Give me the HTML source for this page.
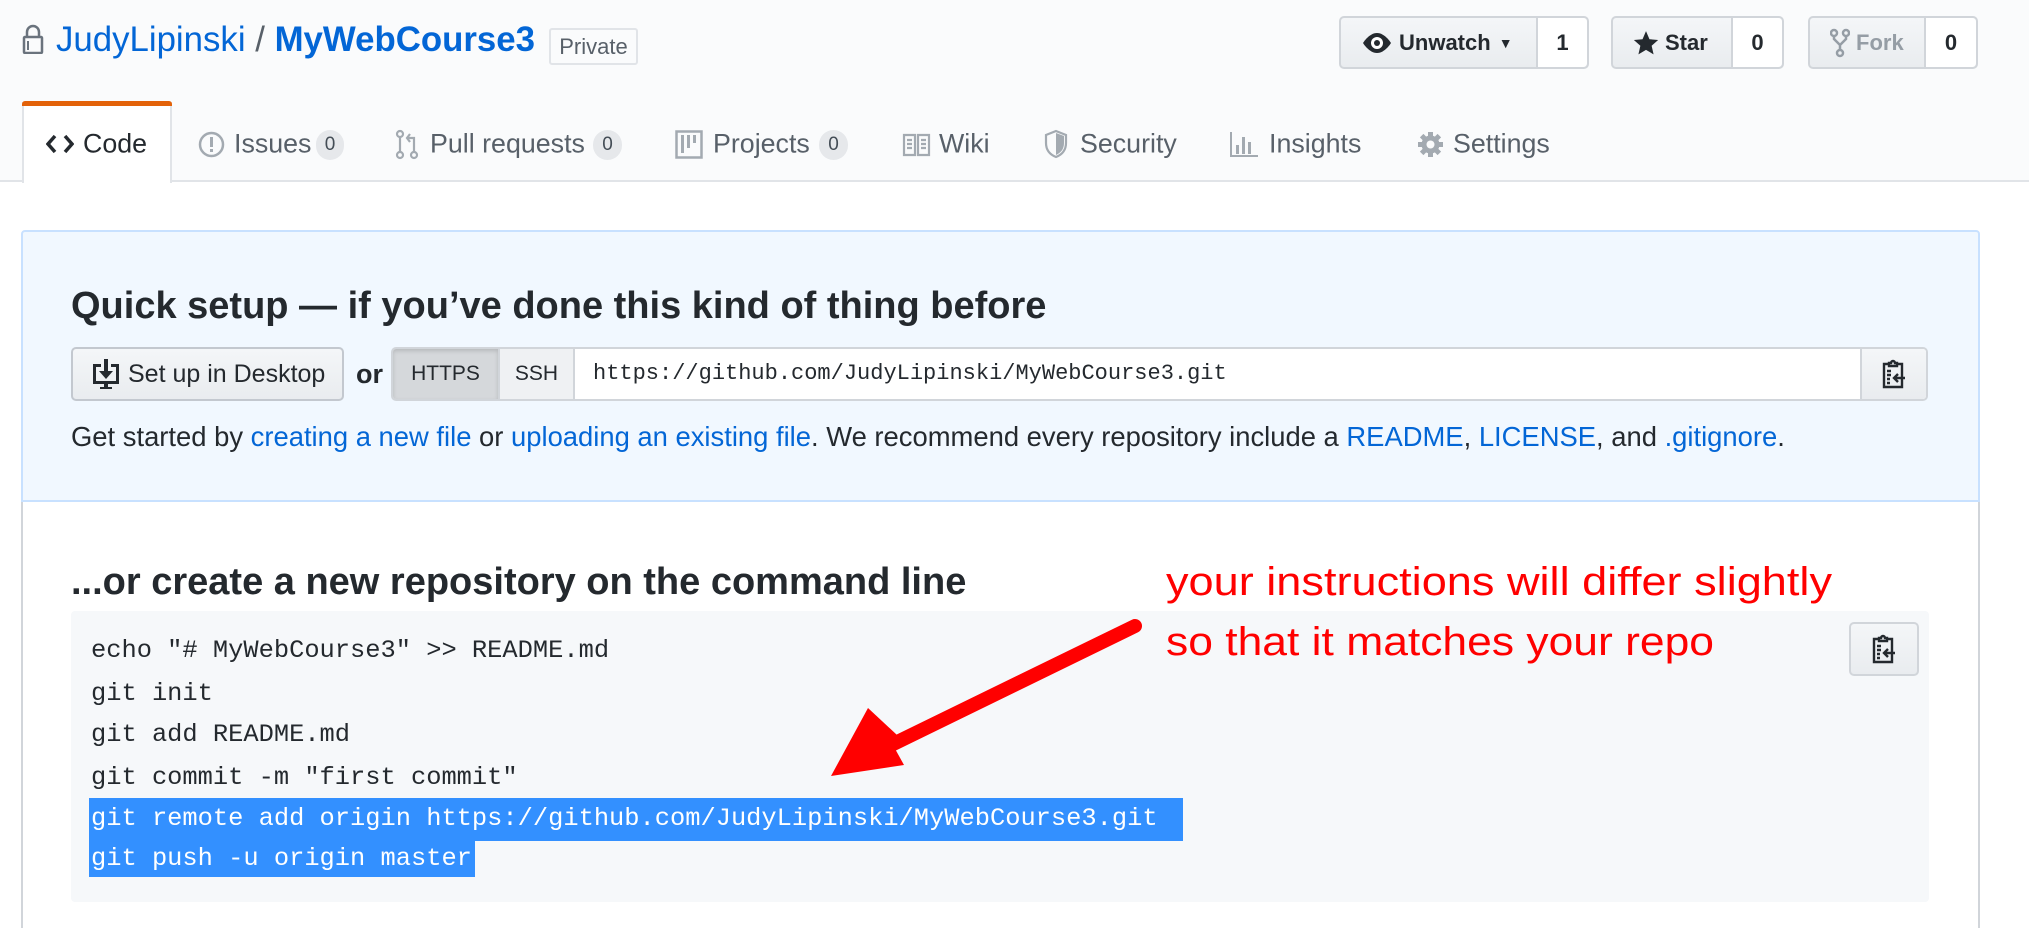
<!DOCTYPE html>
<html><head><meta charset="utf-8"><style>
*{box-sizing:border-box;margin:0;padding:0}
body{width:2029px;height:928px;overflow:hidden;background:#fff;font-family:"Liberation Sans",Arial,sans-serif;color:#24292e;position:relative}
.a{position:absolute}
.hdr{left:0;top:0;width:2029px;height:182px;background:#fafbfc;border-bottom:2px solid #e1e4e8}
.title{left:56px;top:20px;font-size:34.8px;color:#0366d6;white-space:nowrap}
.priv{left:549px;top:28px;width:89px;height:37px;border:2px solid #e1e4e8;border-radius:3px;font-size:22px;color:#586069;text-align:center;line-height:33px}
.btn{border:2px solid #d1d5da;border-radius:5px;background:linear-gradient(#f4f6f8,#e9ecef);display:flex;align-items:center;font-weight:bold;font-size:22px;color:#24292e}
.cnt{position:absolute;top:0;bottom:0;background:#fff;border-left:2px solid #d1d5da;display:flex;align-items:center;justify-content:center;font-weight:bold;font-size:22px;border-radius:0 4px 4px 0}
.tab{top:144px;transform:translateY(-50%);font-size:26.8px;color:#586069;white-space:nowrap}
.bdg{top:130px;height:30px;border-radius:15px;background:#e6e8eb;font-size:19px;color:#444d56;text-align:center;line-height:30px}
.blue{left:21px;top:230px;width:1959px;height:272px;background:#f1f8ff;border:2px solid #c8e1ff;border-radius:4px 4px 0 0}
.h3{font-size:38px;font-weight:bold;white-space:nowrap;color:#24292e}
.mono{font-family:"Liberation Mono","DejaVu Sans Mono",monospace}
a{color:#0366d6;text-decoration:none}
.code{left:71px;top:611px;width:1858px;height:291px;background:#f6f8fa;border-radius:4px}
.ln{left:91px;font-size:25.4px;white-space:pre;line-height:42px;height:42px}
.sel{background:#3390ff;color:#fff}
</style></head><body>
<div class="a hdr"></div>
<svg class="a" style="left:22px;top:24px" width="22" height="30" viewBox="0 0 22 30"><rect x="2" y="13" width="18" height="16" rx="1" fill="none" stroke="#6a737d" stroke-width="2.5"/><path d="M5 13V8a6 6 0 0 1 12 0v5" fill="none" stroke="#6a737d" stroke-width="2.5"/><rect x="5" y="17" width="2" height="9" fill="#6a737d"/></svg>
<div class="a title">JudyLipinski <span style="color:#586069">/</span> <b style="font-weight:bold">MyWebCourse3</b></div>
<div class="a priv">Private</div>

<div class="a btn" style="left:1339px;top:16px;width:250px;height:53px;padding-left:20px">
<svg width="32" height="24" viewBox="0 0 32 24" style="margin-right:6px"><path d="M16 2C8 2 2 12 2 12s6 10 14 10 14-10 14-10S24 2 16 2z" fill="#24292e"/><circle cx="16" cy="12" r="6" fill="#fff"/><circle cx="16" cy="12" r="3" fill="#24292e"/></svg>Unwatch<span style="font-size:14px;margin-left:8px">▼</span>
<div class="cnt" style="left:195px;right:0">1</div></div>
<div class="a btn" style="left:1611px;top:16px;width:173px;height:53px;padding-left:20px">
<svg width="26" height="26" viewBox="0 0 24 24" style="margin-right:6px"><path d="M12 1l3.2 7.5 8 .7-6 5.3 1.8 8L12 18.3 5 22.5l1.8-8-6-5.3 8-.7z" fill="#24292e"/></svg>Star
<div class="cnt" style="left:118px;right:0">0</div></div>
<div class="a btn" style="left:1808px;top:16px;width:170px;height:53px;padding-left:20px;color:#959da5">
<svg width="20" height="30" viewBox="0 0 20 30" style="margin-right:6px"><g fill="none" stroke="#959da5" stroke-width="2.5"><circle cx="4" cy="5" r="3"/><circle cx="16" cy="5" r="3"/><circle cx="10" cy="25" r="3"/><path d="M4 8v3l6 6 6-6V8M10 17v5"/></g></svg>Fork
<div class="cnt" style="left:114px;right:0;color:#24292e">0</div></div>

<!-- tabs -->
<div class="a" style="left:22px;top:102px;width:150px;height:81px;background:#fff;border:2px solid #e1e4e8;border-top:none;border-bottom:none"></div>
<div class="a" style="left:22px;top:101px;width:150px;height:5px;background:#e36209;border-radius:3px 3px 0 0"></div>
<svg class="a" style="left:46px;top:133px" width="28" height="22" viewBox="0 0 28 22"><path d="M9 3L2 11l7 8M19 3l7 8-7 8" fill="none" stroke="#24292e" stroke-width="3.5"/></svg>
<div class="a tab" style="left:83px;color:#24292e">Code</div>
<svg class="a" style="left:198px;top:131px" width="27" height="27" viewBox="0 0 27 27"><circle cx="13.5" cy="13.5" r="11.5" fill="none" stroke="#a3aab1" stroke-width="2.5"/><rect x="12" y="6" width="3" height="10" fill="#a3aab1"/><rect x="12" y="18" width="3" height="3" fill="#a3aab1"/></svg>
<div class="a tab" style="left:234px">Issues</div><div class="a bdg" style="left:316px;width:28px">0</div>
<svg class="a" style="left:395px;top:129px" width="24" height="31" viewBox="0 0 24 31"><g fill="none" stroke="#a3aab1" stroke-width="2.2"><circle cx="5" cy="5" r="3"/><circle cx="5" cy="26" r="3"/><circle cx="19" cy="26" r="3"/><path d="M5 8v15M19 23V9h-6M15 5l-3 4 3 4"/></g></svg>
<div class="a tab" style="left:430px">Pull requests</div><div class="a bdg" style="left:593px;width:29px">0</div>
<svg class="a" style="left:675px;top:130px" width="28" height="29" viewBox="0 0 28 29"><rect x="1.5" y="1.5" width="25" height="26" fill="none" stroke="#a3aab1" stroke-width="2.5"/><rect x="6" y="5" width="3" height="18" fill="#a3aab1"/><rect x="12" y="5" width="3" height="13" fill="#a3aab1"/><rect x="18" y="5" width="3" height="8" fill="#a3aab1"/></svg>
<div class="a tab" style="left:713px">Projects</div><div class="a bdg" style="left:819px;width:29px">0</div>
<svg class="a" style="left:902px;top:133px" width="29" height="24" viewBox="0 0 29 24"><g fill="none" stroke="#a3aab1" stroke-width="2.2"><path d="M2 2h11v20H2zM16 2h11v20H16z"/><path d="M5 7h5M5 11h5M5 15h5M19 7h5M19 11h5M19 15h5"/></g></svg>
<div class="a tab" style="left:939px">Wiki</div>
<svg class="a" style="left:1044px;top:129px" width="24" height="30" viewBox="0 0 24 30"><path d="M12 2L2 6v8c0 8 5 12 10 14 5-2 10-6 10-14V6z" fill="none" stroke="#a3aab1" stroke-width="2.2"/><path d="M12 4v22c4-2 8-5 8-12V7z" fill="#a3aab1"/></svg>
<div class="a tab" style="left:1080px">Security</div>
<svg class="a" style="left:1229px;top:131px" width="30" height="27" viewBox="0 0 30 27"><g fill="#a3aab1"><rect x="1" y="1" width="2" height="25"/><rect x="1" y="24" width="28" height="2"/><rect x="7" y="14" width="3" height="9"/><rect x="13" y="6" width="3" height="17"/><rect x="19" y="11" width="3" height="12"/></g></svg>
<div class="a tab" style="left:1269px">Insights</div>
<svg class="a" style="left:1417px;top:131px" width="27" height="27" viewBox="0 0 27 27"><g fill="#a3aab1"><circle cx="13.5" cy="13.5" r="9"/><rect x="11" y="1" width="5" height="25"/><rect x="1" y="11" width="25" height="5"/><rect x="11" y="1" width="5" height="25" transform="rotate(45 13.5 13.5)"/><rect x="11" y="1" width="5" height="25" transform="rotate(-45 13.5 13.5)"/></g><circle cx="13.5" cy="13.5" r="4" fill="#fafbfc"/></svg>
<div class="a tab" style="left:1453px">Settings</div>

<!-- quick setup -->
<div class="a" style="left:21px;top:500px;width:2px;height:428px;background:#d1d5da"></div>
<div class="a" style="left:1978px;top:500px;width:2px;height:428px;background:#d1d5da"></div>
<div class="a blue"></div>
<div class="a h3" style="left:71px;top:285px">Quick setup — if you’ve done this kind of thing before</div>
<div class="a btn" style="left:71px;top:347px;width:273px;height:54px;padding-left:18px;font-weight:normal;font-size:25px;border-color:#c3c8cf">
<svg width="30" height="32" viewBox="0 0 30 32" style="margin-right:7px"><g fill="#24292e"><path d="M2 6h8v3H5v14h20V9h-5V6h8v20H17v3h4v2H9v-2h4v-3H2z"/><rect x="13" y="1" width="4" height="14"/><path d="M8 13h14l-7 8z"/></g></svg>Set up in Desktop</div>
<div class="a" style="left:356px;top:359px;font-size:27px;font-weight:bold">or</div>
<div class="a" style="left:391px;top:347px;width:1537px;height:54px;border:2px solid #d1d5da;border-radius:5px;background:#fff;overflow:hidden">
<div class="a" style="left:0;top:0;width:105px;height:50px;background:#d5d8db;box-shadow:inset 0 2px 4px rgba(0,0,0,.15);font-size:21px;text-align:center;line-height:50px">HTTPS</div>
<div class="a" style="left:105px;top:0;width:77px;height:50px;background:#eff1f3;border-left:2px solid #d1d5da;border-right:2px solid #d1d5da;font-size:21px;text-align:center;line-height:50px">SSH</div>
<div class="a mono" style="left:200px;top:0;line-height:50px;font-size:22px">https://github.com/JudyLipinski/MyWebCourse3.git</div>
<div class="a" style="left:1467px;top:0;width:68px;height:50px;background:linear-gradient(#f4f6f8,#e9ecef);border-left:2px solid #d1d5da"></div>
</div>
<svg class="a" style="left:1882px;top:359px" width="24" height="30" viewBox="0 0 24 30"><g fill="none" stroke="#24292e" stroke-width="2.4"><path d="M6 5H2v23h18V5h-4"/><path d="M7 7V4h2a2 2 0 0 1 4 0h2v3z"/><path d="M5 12h4M5 16h4M5 20h3M5 24h3M23 19h-10M16 15l-4 4 4 4"/></g></svg>
<div class="a" style="left:71px;top:421px;font-size:27.4px;white-space:nowrap">Get started by <a>creating a new file</a> or <a>uploading an existing file</a>. We recommend every repository include a <a>README</a>, <a>LICENSE</a>, and <a>.gitignore</a>.</div>

<div class="a h3" style="left:71px;top:561px">...or create a new repository on the command line</div>
<div class="a code"></div>
<div class="a mono ln" style="top:630px">echo "# MyWebCourse3" &gt;&gt; README.md</div>
<div class="a mono ln" style="top:673px">git init</div>
<div class="a mono ln" style="top:714px">git add README.md</div>
<div class="a mono ln" style="top:757px">git commit -m "first commit"</div>
<div class="a mono ln" style="top:798px;left:89px;padding-left:2px;width:1094px;height:43px" ><span class="sel" style="position:absolute;left:0;top:0;width:1094px;height:43px"></span><span style="position:relative;color:#fff">git remote add origin https://github.com/JudyLipinski/MyWebCourse3.git</span></div>
<div class="a mono ln" style="top:841px;left:89px;padding-left:2px;width:386px;height:36px;background:#3390ff;color:#fff;line-height:36px">git push -u origin master</div>
<div class="a btn" style="left:1849px;top:622px;width:70px;height:54px;justify-content:center"><svg width="24" height="30" viewBox="0 0 24 30"><g fill="none" stroke="#24292e" stroke-width="2.4"><path d="M6 5H2v23h18V5h-4"/><path d="M7 7V4h2a2 2 0 0 1 4 0h2v3z"/><path d="M5 12h4M5 16h4M5 20h3M5 24h3M23 19h-10M16 15l-4 4 4 4"/></g></svg></div>

<svg class="a" style="left:0;top:0" width="2029" height="928">
<line x1="1135" y1="626" x2="885" y2="748" stroke="#ff0000" stroke-width="14" stroke-linecap="round"/>
<polygon points="831,776 897,735 868,708" fill="#ff0000"/>
<polygon points="831,776 883,727 904,765" fill="#ff0000"/>
<text x="1166" y="595" font-family="Liberation Sans, sans-serif" font-size="40" fill="#ff0000" textLength="666" lengthAdjust="spacingAndGlyphs">your instructions will differ slightly</text>
<text x="1166" y="655" font-family="Liberation Sans, sans-serif" font-size="40" fill="#ff0000" textLength="548" lengthAdjust="spacingAndGlyphs">so that it matches your repo</text>
</svg>
</body></html>
